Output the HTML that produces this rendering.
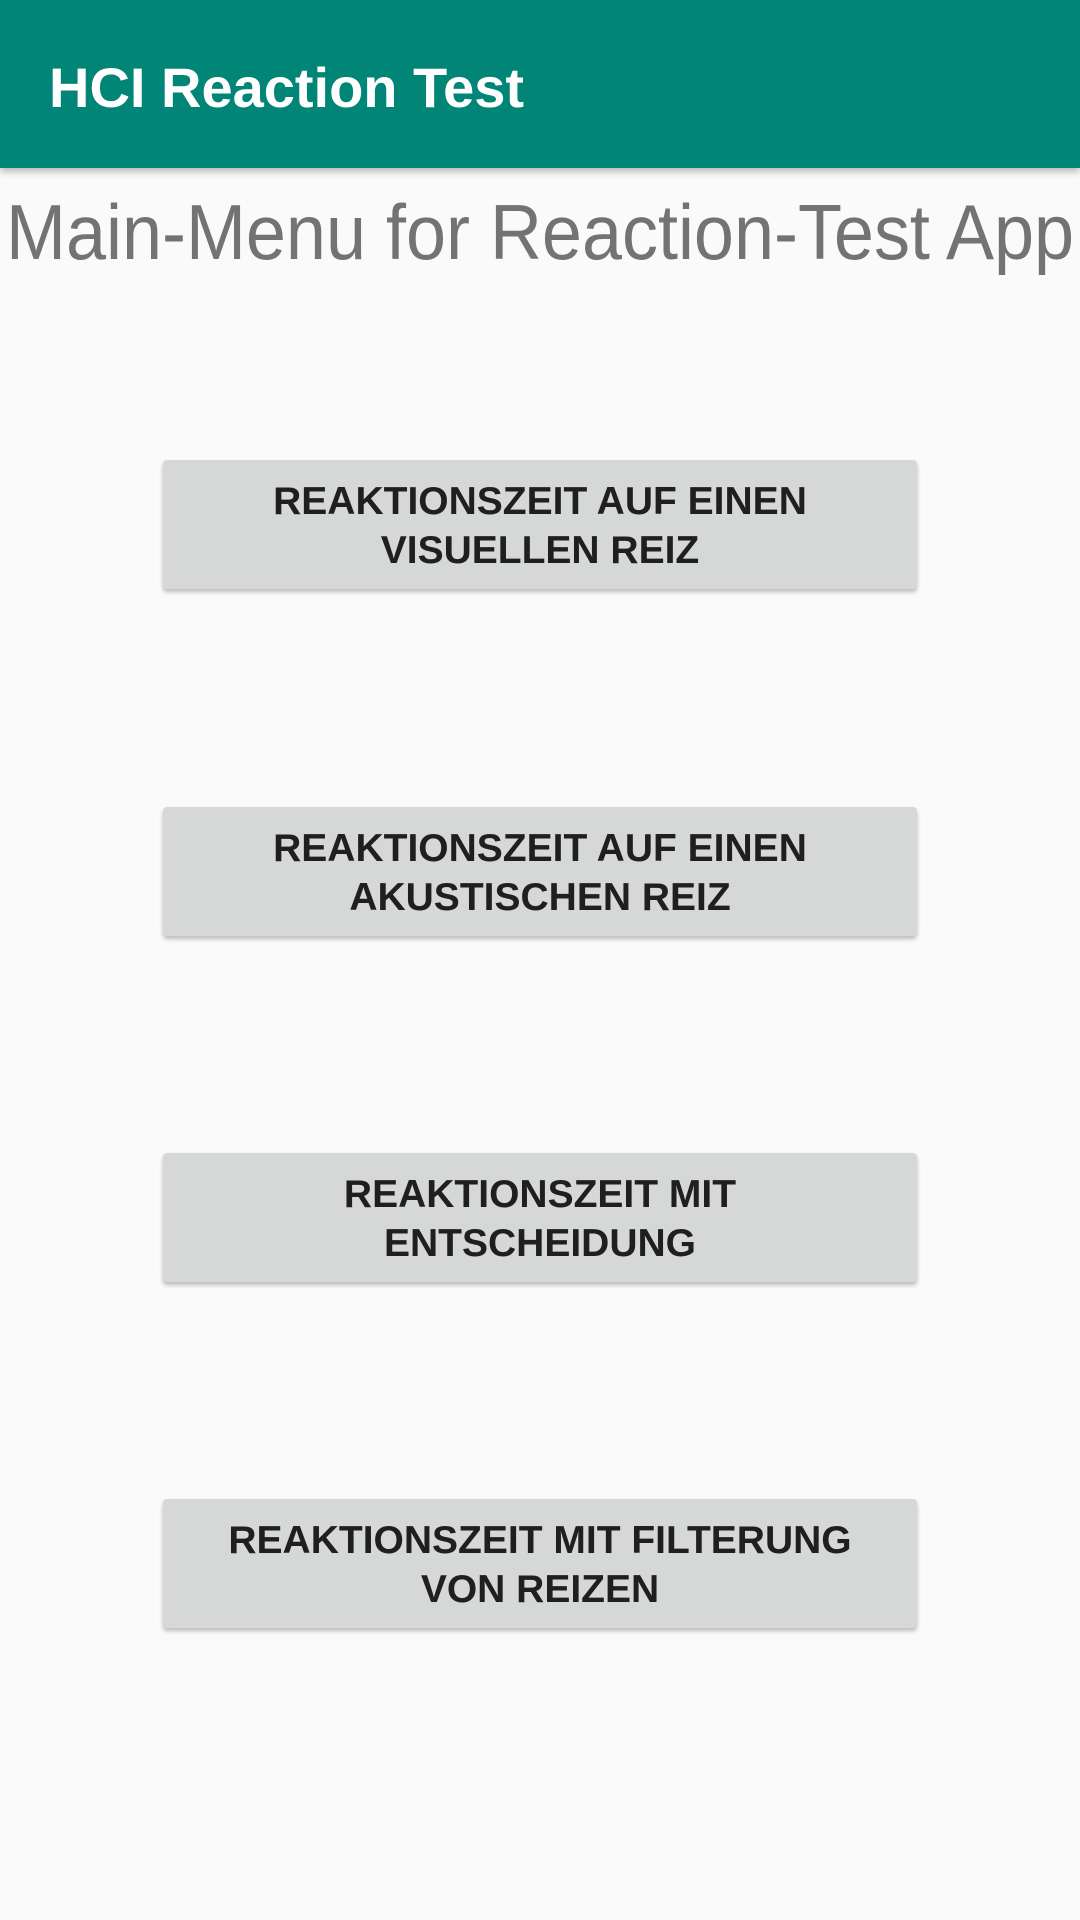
<!DOCTYPE html>
<html><head><meta charset="utf-8"><style>
body{margin:0;width:1080px;height:1920px;background:#fafafa;font-family:"Liberation Sans",sans-serif;position:relative;overflow:hidden}
.bar{position:absolute;left:0;top:0;width:1080px;height:168px;background:#008577;box-shadow:0 3px 8px rgba(0,0,0,.3)}
.bar span{position:absolute;left:49px;top:53px;color:#fff;font-size:56px;font-weight:bold;line-height:70px}
svg.t{position:absolute;left:0;top:170px}
.b{position:absolute;left:163px;width:754px;height:129px;background:#d6d7d7;border-radius:4px;box-shadow:0 3px 4px rgba(0,0,0,.25);display:flex;align-items:center;justify-content:center;text-align:center;color:#1f1f1f;font-size:39px;font-weight:bold;line-height:49px;padding-top:3px;box-sizing:border-box}
</style></head><body>
<div class="bar"><span>HCI Reaction Test</span></div>
<svg class="t" width="1080" height="110"><text x="6" y="89" textLength="1068" lengthAdjust="spacingAndGlyphs" font-family="Liberation Sans" font-size="78" fill="#737373">Main-Menu for Reaction-Test App</text></svg>
<div class="b" style="top:460px">REAKTIONSZEIT AUF EINEN<br>VISUELLEN REIZ</div>
<div class="b" style="top:807px">REAKTIONSZEIT AUF EINEN<br>AKUSTISCHEN REIZ</div>
<div class="b" style="top:1153px">REAKTIONSZEIT MIT<br>ENTSCHEIDUNG</div>
<div class="b" style="top:1499px">REAKTIONSZEIT MIT FILTERUNG<br>VON REIZEN</div>
</body></html>
